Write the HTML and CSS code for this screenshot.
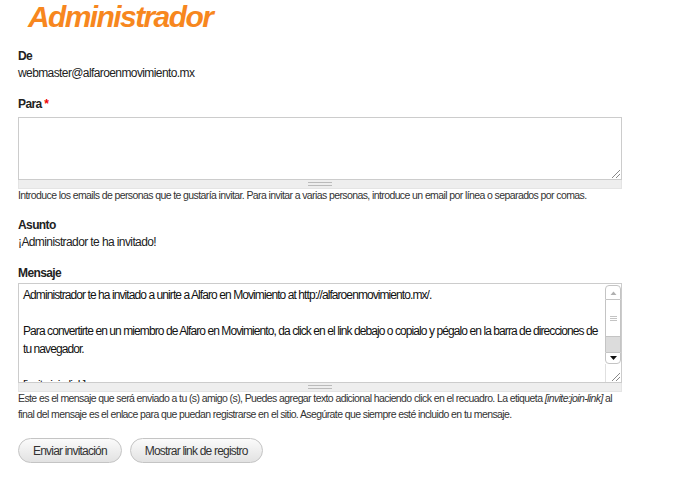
FILE: index.html
```html
<!DOCTYPE html>
<html lang="es">
<head>
<meta charset="utf-8">
<link rel="stylesheet" href="styles.css">
</head>
<body>
<div class="page">
  <h1 class="title">Administrador</h1>
  <div class="field field-first">
    <div class="label">De</div>
    <div class="value">webmaster@alfaroenmovimiento.mx</div>
  </div>
  <div class="field">
    <div class="label">Para <span class="req">*</span></div>
    <div class="ta-wrap">
      <div class="ta ta-small"><span class="resize"></span></div>
      <div class="grippie"><span></span></div>
    </div>
    <div class="desc">Introduce los emails de personas que te gustaría invitar. Para invitar a varias personas, introduce un email por línea o separados por comas.</div>
  </div>
  <div class="field">
    <div class="label">Asunto</div>
    <div class="value">¡Administrador te ha invitado!</div>
  </div>
  <div class="field">
    <div class="label">Mensaje</div>
    <div class="ta-wrap ta-wrap-msg">
      <div class="ta ta-big">
        <div class="ta-text">
          <p>Administrador te ha invitado a unirte a Alfaro en Movimiento at http://alfaroenmovimiento.mx/.</p>
          <p class="blank">&nbsp;</p>
          <p>Para convertirte en un miembro de Alfaro en Movimiento, da click en el link debajo o copialo y pégalo en la barra de direcciones de tu navegador.</p>
          <p class="blank">&nbsp;</p>
          <p>[invite:join-link]</p>
        </div>
        <div class="sb">
          <div class="sb-btn sb-up"><svg width="9" height="6" viewBox="0 0 9 6"><path d="M1.5 5 L4.5 1.5 L7.5 5 Z" fill="#b0b0b0"/></svg></div>
          <div class="sb-track">
            <div class="sb-thumb"><svg width="7" height="7" viewBox="0 0 7 7"><path d="M0 1.5H7M0 3.5H7M0 5.5H7" stroke="#c4c4c4" stroke-width="1"/></svg></div>
            <div class="sb-rest"></div>
          </div>
          <div class="sb-btn sb-down"><svg width="9" height="6" viewBox="0 0 9 6"><path d="M1 1 L8 1 L4.5 5 Z" fill="#111"/></svg></div>
          <div class="sb-corner"></div>
        </div>
        <span class="resize"></span>
      </div>
      <div class="grippie"><span></span></div>
    </div>
    <div class="desc desc-msg">Este es el mensaje que será enviado a tu (s) amigo (s), Puedes agregar texto adicional haciendo click en el recuadro. La etiqueta <em>[invite:join-link]</em> al final del mensaje es el enlace para que puedan registrarse en el sitio. Asegúrate que siempre esté incluido en tu mensaje.</div>
  </div>
  <div class="actions">
    <button class="btn" type="button">Enviar invitación</button>
    <button class="btn" type="button">Mostrar link de registro</button>
  </div>
</div>
</body>
</html>
```
FILE: styles.css
```css
* { box-sizing: border-box; }
body {
  margin: 0;
  background: #fff;
  font-family: "Liberation Sans", Arial, sans-serif;
  color: #222;
  font-size: 12px;
  letter-spacing: -0.6px;
}
.page {
  width: 640px;
  padding-left: 18px;
}
.title {
  margin: 0 0 0 10px;
  font-style: italic;
  font-weight: bold;
  font-size: 30px;
  line-height: 34px;
  color: #f7871e;
  letter-spacing: -1.6px;
}
.field { margin-top: 14px; }
.field-first { margin-top: 14px; }
.label {
  font-weight: bold;
  line-height: 17px;
  color: #222;
}
.req { color: #e00; }
.value { line-height: 17px; }
.ta-wrap { margin-top: 4px; width: 604px; }
.ta-wrap-msg { margin-top: 1px; }
.ta {
  position: relative;
  border: 1px solid #ccc;
  background: #fff;
}
.ta-small { height: 63px; }
.ta-big { height: 100px; display: flex; overflow: hidden; }
.resize {
  position: absolute;
  right: 1px;
  bottom: 1px;
  width: 10px;
  height: 10px;
  background: repeating-linear-gradient(135deg, transparent 0 2px, #888 2px 3px);
  clip-path: polygon(100% 0, 100% 100%, 0 100%);
}
.grippie {
  height: 9px;
  background: #eee;
  border: 1px solid #e4e4e4;
  border-top: 0;
  display: flex;
  justify-content: center;
  align-items: center;
}
.grippie span {
  width: 24px;
  height: 4px;
  border-top: 1px solid #bbb;
  border-bottom: 1px solid #bbb;
}
.ta-text {
  flex: 1;
  padding: 2px 0 0 4px;
  line-height: 18px;
  letter-spacing: -0.92px;
  color: #111;
}
.ta-text p { margin: 0; }
.sb {
  width: 16px;
  margin: 1px 0 0 0;
  display: flex;
  flex-direction: column;
}
.sb-btn {
  height: 15px;
  border: 1px solid #c4c4c4;
  background: #fff;
  display: flex;
  align-items: center;
  justify-content: center;
}
.sb-up { border-radius: 4px 4px 0 0; }
.sb-down { border-radius: 0 0 4px 4px; height: 12px; }
.sb-track {
  height: 52px;
  display: flex;
  flex-direction: column;
  border-left: 1px solid #c4c4c4;
  border-right: 1px solid #c4c4c4;
}
.sb-thumb {
  height: 37px;
  background: #fff;
  border-bottom: 1px solid #c4c4c4;
  display: flex;
  align-items: center;
  justify-content: center;
}
.sb-rest { flex: 1; background: #dcdcdc; }
.sb-corner { flex: 1; background: #fff; border-left: 1px solid #e0e0e0; }
.desc {
  font-size: 10.5px;
  line-height: 16px;
  color: #333;
  margin-top: -2px;
  letter-spacing: -0.6px;
}
.desc-msg { margin-top: -2px; width: 606px; }
.desc em { font-style: italic; }
.actions {
  margin-top: 16px;
  display: flex;
  gap: 8px;
}
.btn {
  font-family: inherit;
  font-size: 12px;
  letter-spacing: -0.8px;
  color: #333;
  height: 25px;
  padding: 0 14px;
  border: 1px solid #c4c4c4;
  border-radius: 13px;
  background: linear-gradient(#fbfbfb, #e2e2e2);
}
```
